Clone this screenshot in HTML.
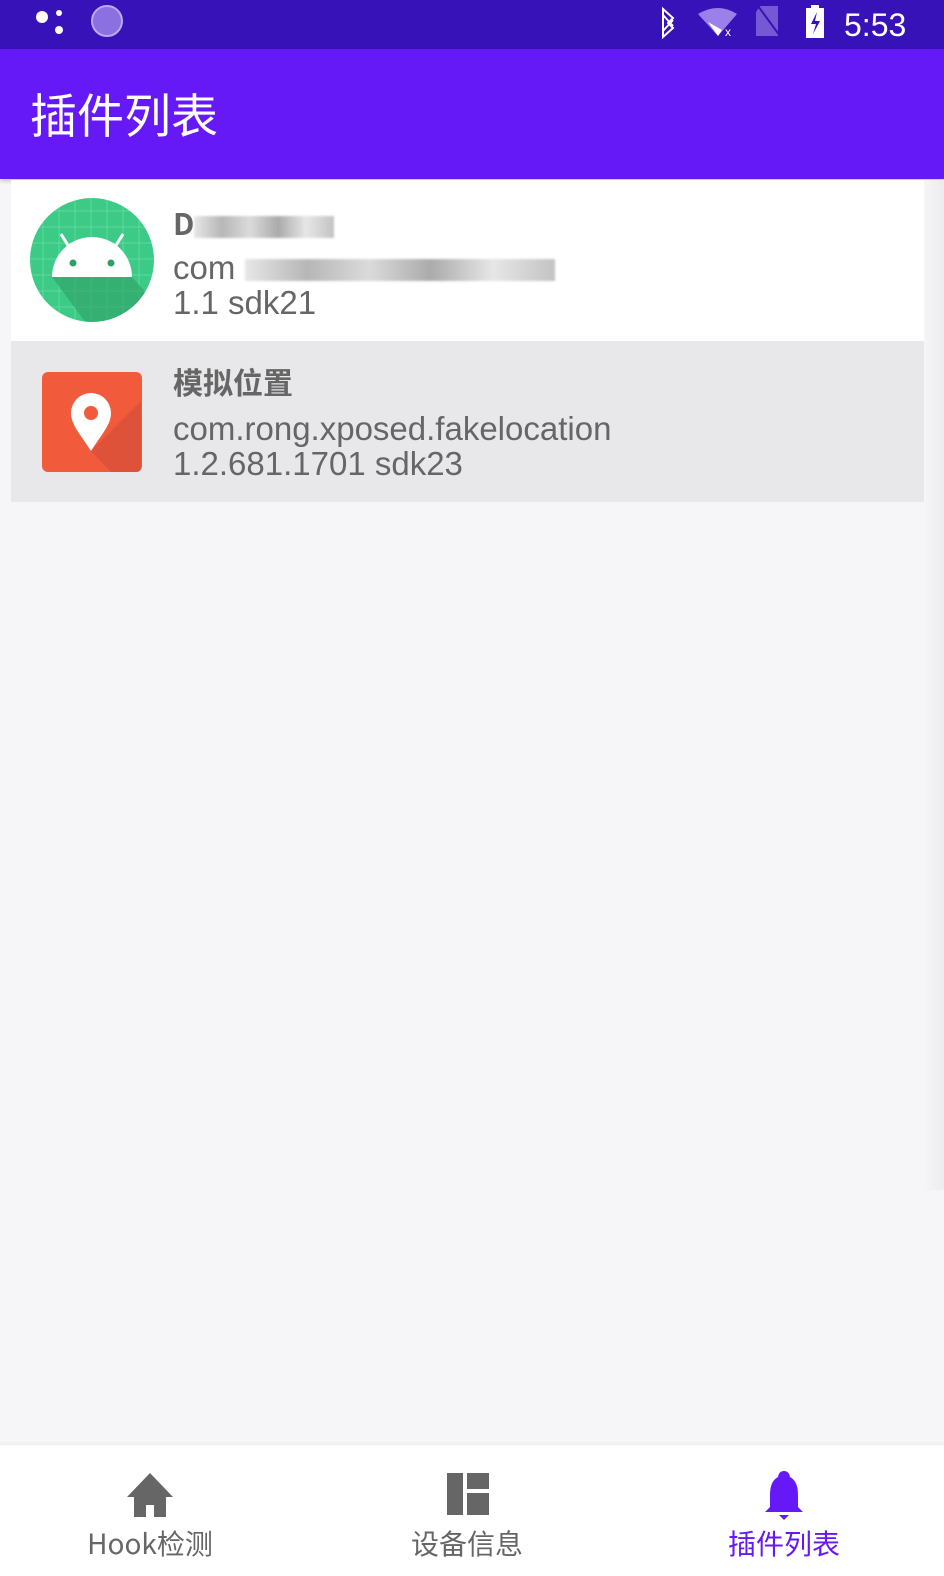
<!DOCTYPE html>
<html><head><meta charset="utf-8"><style>
*{margin:0;padding:0;box-sizing:border-box}
body{width:944px;height:1576px;background:#f6f6f8;font-family:"Liberation Sans","Noto Sans CJK SC",sans-serif;position:relative;overflow:hidden}
.sb{position:absolute;left:0;top:0;width:944px;height:49px;background:#3812b9}
.ab{position:absolute;left:0;top:49px;width:944px;height:130px;background:#6519f6;box-shadow:0 2px 4px rgba(0,0,0,.2)}
.ab h1{position:absolute;left:30px;top:34px;font-size:47px;font-weight:normal;color:#fff;font-family:"Noto Sans CJK SC",sans-serif;line-height:60px}
.item{position:absolute;left:11px;width:913px;height:161px}
.t{position:absolute;left:162px;color:#666;font-size:33px;line-height:35px;white-space:nowrap}
.b{font-weight:bold;font-family:"Noto Sans CJK SC",sans-serif;font-size:30px}
.blur{display:inline-block;height:22px;background:linear-gradient(90deg,#ddd,#999 20%,#ccc 40%,#888 60%,#ddd 80%,#aaa);opacity:.7;vertical-align:middle;filter:blur(1px)}
.nav{position:absolute;left:0;top:1445px;width:944px;height:131px;background:#fff;box-shadow:0 -1px 3px rgba(0,0,0,.05)}
.nl{position:absolute;top:80px;font-size:28px;color:#666;width:200px;text-align:center;font-family:"Noto Sans CJK SC",sans-serif;line-height:36px}
</style></head><body>
<div class="sb">
<svg width="944" height="49" style="position:absolute;left:0;top:0">
<circle cx="42" cy="17" r="6" fill="#fff"/><circle cx="59" cy="13" r="3" fill="#fff"/><circle cx="59" cy="30" r="4" fill="#fff"/>
<circle cx="107" cy="21" r="15" fill="#8a70e0" stroke="#bba8f0" stroke-width="2"/>
<path d="M663 9l10 9-5 5 5 5-10 9V9zM663 15l10 11M663 31l10-11" stroke="#fff" stroke-width="2" fill="none"/>
<path d="M698 14 Q718 2 737 14 L718 36z" fill="#9a80e8"/><path d="M708 22l10 14 4-6z" fill="#fff"/>
<text x="725" y="36" font-size="12" fill="#fff" font-family="Liberation Sans">x</text>
<path d="M760 6h18v30h-22V12z" fill="#7558d4"/><path d="M758 6l22 30" stroke="#3812b9" stroke-width="2"/>
<rect x="806" y="8" width="18" height="30" fill="#fff"/><rect x="811" y="5" width="8" height="4" fill="#fff"/><path d="M817 12l-6 12h5l-3 10 7-13h-5z" fill="#3812b9"/>
<text x="844" y="36" font-size="32" fill="#fff" font-family="Liberation Sans">5:53</text>
</svg></div>
<div class="ab"><h1>插件列表</h1></div>
<div style="position:absolute;left:924px;top:180px;width:20px;height:1010px;background:linear-gradient(90deg,#f6f6f8,#ececee)"></div>
<div class="item" style="top:180px;background:#fff">
<svg width="130" height="130" style="position:absolute;left:18px;top:17px" viewBox="0 0 130 130">
<defs><clipPath id="c"><circle cx="63" cy="63" r="62"/></clipPath></defs>
<circle cx="63" cy="63" r="62" fill="#3ccb86"/>
<g clip-path="url(#c)" stroke="#5fd89d" stroke-width="1"><path d="M0 14h130M0 30h130M0 46h130M0 62h130M0 78h130M0 94h130M0 110h130M14 0v130M30 0v130M46 0v130M62 0v130M78 0v130M94 0v130M110 0v130"/>
<path d="M23 80 L103 80 L130 110 L90 130 L60 130z" fill="#2f9f68" stroke="none" opacity=".6"/></g>
<path d="M23 80 A40 40 0 0 1 103 80z" fill="#fff"/>
<path d="M40 50l-8-13M86 50l8-13" stroke="#fff" stroke-width="3"/>
<circle cx="44" cy="66" r="3.5" fill="#2f9f68"/><circle cx="82" cy="66" r="3.5" fill="#2f9f68"/>
</svg>
<div class="t b" style="top:25px">D<span class="blur" style="width:140px"></span></div>
<div class="t" style="top:70px">com <span class="blur" style="width:310px"></span></div>
<div class="t" style="top:105px">1.1 sdk21</div>
</div>
<div class="item" style="top:341px;background:#e8e8ea">
<svg width="104" height="104" style="position:absolute;left:30px;top:30px" viewBox="0 0 104 104">
<rect x="1" y="1" width="100" height="100" rx="6" fill="#f15a3b"/>
<path d="M50 80 L100 30 L100 96 Q100 101 95 101 L70 101z" fill="#d9503a" opacity=".8"/>
<path d="M50 80 C40 64 30 54 30 42 A20 20 0 0 1 70 42 C70 54 60 64 50 80z" fill="#fff"/>
<circle cx="50" cy="42" r="7" fill="#f15a3b"/>
</svg>
<div class="t b" style="top:23px">模拟位置</div>
<div class="t" style="top:70px">com.rong.xposed.fakelocation</div>
<div class="t" style="top:105px">1.2.681.1701 sdk23</div>
</div>
<div class="nav">
<svg width="944" height="80" style="position:absolute;left:0;top:4px">
<path d="M150 24 L127 48 L134 48 L134 68 L146 68 L146 56 L154 56 L154 68 L166 68 L166 48 L173 48z" fill="#666"/>
<rect x="447" y="24" width="16" height="42" fill="#666"/><rect x="467" y="24" width="22" height="16" fill="#666"/><rect x="467" y="44" width="22" height="22" fill="#666"/>
<path d="M784 22 Q789 22 790 28 Q798 32 798 46 L798 58 L803 63 L765 63 L770 58 L770 46 Q770 32 778 28 Q779 22 784 22z" fill="#6519f6"/><path d="M779 66 h10 l-5 5z" fill="#6519f6"/>
</svg>
<div class="nl" style="left:50px">Hook检测</div>
<div class="nl" style="left:367px">设备信息</div>
<div class="nl" style="left:684px;color:#6519f6">插件列表</div>
</div>
</body></html>
